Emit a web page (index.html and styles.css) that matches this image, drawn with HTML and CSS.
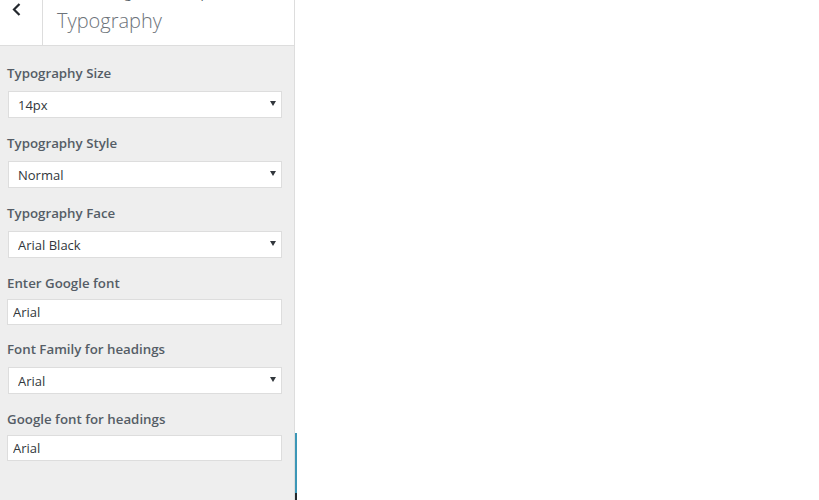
FILE: index.html
```html
<!DOCTYPE html>
<html lang="en">
<head>
    <meta charset="UTF-8">
    <meta name="viewport" content="width=device-width, initial-scale=1.0">
    <title>Typography</title>
    <link rel="stylesheet" href="styles.css">
</head>
<body>
    <div id="wrap">
        <div id="sidebar">
            <div class="section-head">
                <span class="back-btn">
                    <svg width="12" height="14" viewBox="0 0 12 14">
                        <polyline points="8.5,2 3,7.5 8.5,13" fill="none" stroke="#23282d" stroke-width="2.2"/>
                    </svg>
                </span>
                <div class="head-title">
                    <span class="action">Customizing &#9656; Theme Options</span>
                    <h3>Typography</h3>
                </div>
            </div>
            <ul class="controls">
                <li class="control">
                    <span class="control-title">Typography Size</span>
                    <span class="select-box"><select><option>14px</option></select></span>
                </li>
                <li class="control">
                    <span class="control-title">Typography Style</span>
                    <span class="select-box"><select><option>Normal</option></select></span>
                </li>
                <li class="control">
                    <span class="control-title">Typography Face</span>
                    <span class="select-box"><select><option>Arial Black</option></select></span>
                </li>
                <li class="control">
                    <span class="control-title">Enter Google font</span>
                    <input type="text" value="Arial">
                </li>
                <li class="control">
                    <span class="control-title">Font Family for headings</span>
                    <span class="select-box"><select><option>Arial</option></select></span>
                </li>
                <li class="control">
                    <span class="control-title">Google font for headings</span>
                    <input type="text" value="Arial">
                </li>
            </ul>
        </div>
        <div id="preview">
            <span class="edge"></span>
        </div>
    </div>
</body>
</html>
```
FILE: styles.css
```css
*{
    margin: 0;
    padding: 0;
    box-sizing: border-box;
}
body{
    font-family: "Open Sans", "Noto Sans", sans-serif;
    background: #ffffff;
    overflow: hidden;
}
#wrap{
    display: flex;
    height: 500px;
}
#sidebar{
    width: 295px;
    flex: none;
    background: #eeeeee;
    border-right: 1px solid #dddddd;
}
.section-head{
    display: flex;
    height: 46px;
    background: #ffffff;
    border-bottom: 1px solid #dddddd;
    overflow: hidden;
}
.back-btn{
    width: 43px;
    flex: none;
    border-right: 1px solid #dddddd;
    padding: 2px 0 0 11px;
}
.back-btn svg{
    display: block;
}
.head-title{
    padding-left: 14px;
    margin-top: -16px;
}
.action{
    display: block;
    font-size: 13px;
    line-height: 18px;
    color: #555d66;
    margin-bottom: 6px;
}
.head-title h3{
    font-size: 20px;
    font-weight: 300;
    line-height: 26px;
    color: #6d737a;
}
.controls{
    list-style: none;
    padding: 17px 12px 0 7px;
}
.control{
    padding-bottom: 12px;
}
.control-title{
    display: block;
    font-size: 13.3px;
    font-weight: 600;
    line-height: 20px;
    color: #555d66;
    padding-bottom: 6px;
}
.select-box{
    display: block;
    position: relative;
    padding: 2px 0 3px 1px;
}
.select-box select{
    display: block;
    width: 100%;
    height: 27px;
    appearance: none;
    -webkit-appearance: none;
    border: 1px solid #dddddd;
    border-radius: 0;
    background: #ffffff;
    font-family: inherit;
    font-size: 13px;
    color: #32373c;
    padding: 0 20px 0 9px;
    outline: none;
}
.select-box::after{
    content: "";
    position: absolute;
    right: 6px;
    top: 12px;
    border-left: 3px solid transparent;
    border-right: 3px solid transparent;
    border-top: 5px solid #32373c;
}
.control input{
    display: block;
    width: 100%;
    height: 26px;
    margin-bottom: 2px;
    border: 1px solid #dddddd;
    border-radius: 0;
    background: #ffffff;
    font-family: inherit;
    font-size: 13px;
    color: #32373c;
    padding: 0 5px;
    outline: none;
}
#preview{
    flex: 1;
    position: relative;
}
.edge{
    position: absolute;
    left: 0;
    top: 433px;
    width: 2px;
    height: 67px;
    background: #3c97b7;
    border-bottom: 7px solid #23282d;
}
```
